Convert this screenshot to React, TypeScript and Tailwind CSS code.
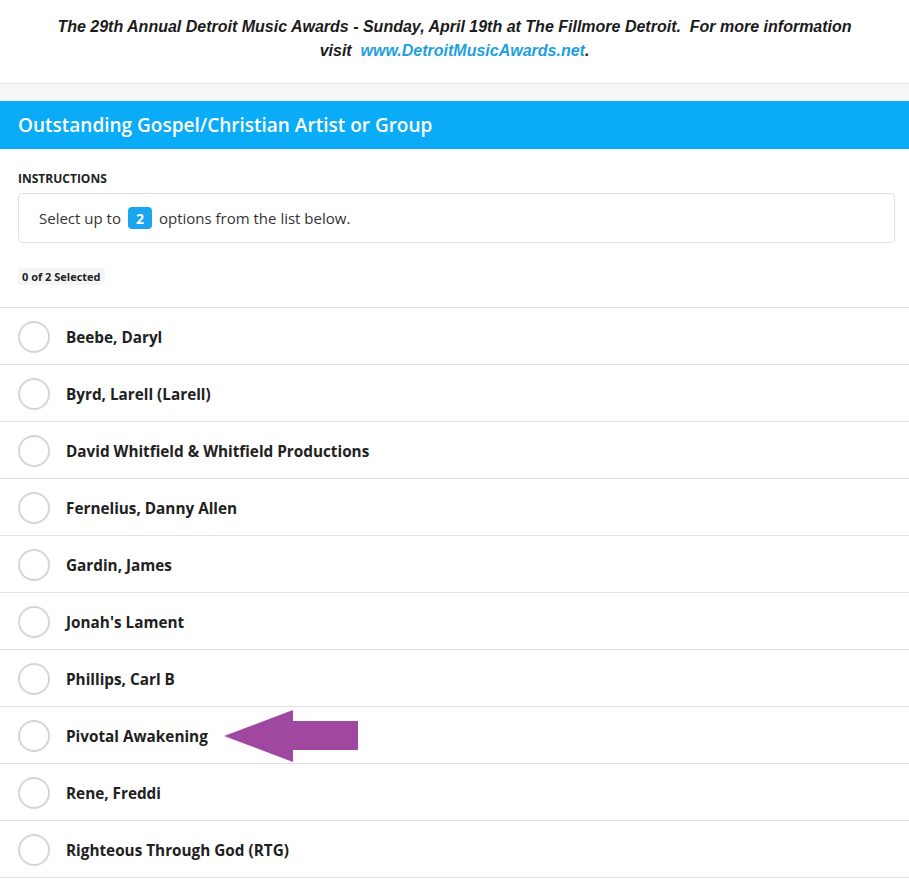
import React from 'react';

const nominees = [
  'Beebe, Daryl',
  'Byrd, Larell (Larell)',
  'David Whitfield & Whitfield Productions',
  'Fernelius, Danny Allen',
  'Gardin, James',
  "Jonah's Lament",
  'Phillips, Carl B',
  'Pivotal Awakening',
  'Rene, Freddi',
  'Righteous Through God (RTG)',
];

function PointerArrow() {
  return (
    <svg width="136" height="54" viewBox="0 0 136 54" className="absolute left-[224px] top-[2px]">
      <path d="M0 27 L69 1 L69 12 L134 12 L134 41 L69 41 L69 53 Z" fill="#a0479f" />
    </svg>
  );
}

export default function App() {
  return (
    <div className="w-[909px] min-h-[883px] bg-white text-[#212529] font-['Open_Sans','Noto_Sans',sans-serif]">
      <div className="h-[84px] border-b border-[#e6e7e9] pt-[15px] text-center">
        <p className="text-[16px] font-bold italic leading-[24px] text-[#1b1b1b] font-['Liberation_Sans','Arial',sans-serif]">
          The 29th Annual Detroit Music Awards - Sunday, April 19th at The Fillmore Detroit.&nbsp; For more information
          <br />
          visit&nbsp; <span className="text-[#1d9fe0]">www.DetroitMusicAwards.net</span>.
        </p>
      </div>
      <div className="h-[17px] bg-[#f6f7f9]" />
      <div className="flex h-[48px] items-center bg-[#0aacf7] px-[18px]">
        <h1 className="text-[19px] font-semibold text-white">Outstanding Gospel/Christian Artist or Group</h1>
      </div>
      <div className="pl-[18px] pr-[14px] pt-[22px]">
        <div className="text-[12px] font-bold uppercase leading-[16px] text-[#222]">Instructions</div>
        <div className="mt-[6px] flex h-[50px] items-center rounded border border-[#dee2e6] px-[20px] text-[15px] text-[#333]">
          Select up to
          <span className="mx-[7px] inline-flex h-[22px] w-[24px] items-center justify-center rounded bg-[#1aa6ee] text-[14px] font-bold text-white">
            2
          </span>
          options from the list below.
        </div>
        <div className="mt-[25px] inline-block rounded bg-[#f3f5f7] px-[4px] py-[1px] text-[11px] font-bold leading-[15px] text-[#222]">
          0 of 2 Selected
        </div>
      </div>
      <ul className="mt-[20px] border-t border-[#e0e0e0]">
        {nominees.map((n) => (
          <li key={n} className="relative flex h-[57px] items-center border-b border-[#e0e0e0] px-[18px] pt-[2px]">
            <span className="h-[32px] w-[32px] shrink-0 rounded-full border-2 border-[#d6d6d6]" />
            <span className="ml-[16px] text-[15.3px] font-bold text-[#212121]">{n}</span>
            {n === 'Pivotal Awakening' && <PointerArrow />}
          </li>
        ))}
      </ul>
    </div>
  );
}
